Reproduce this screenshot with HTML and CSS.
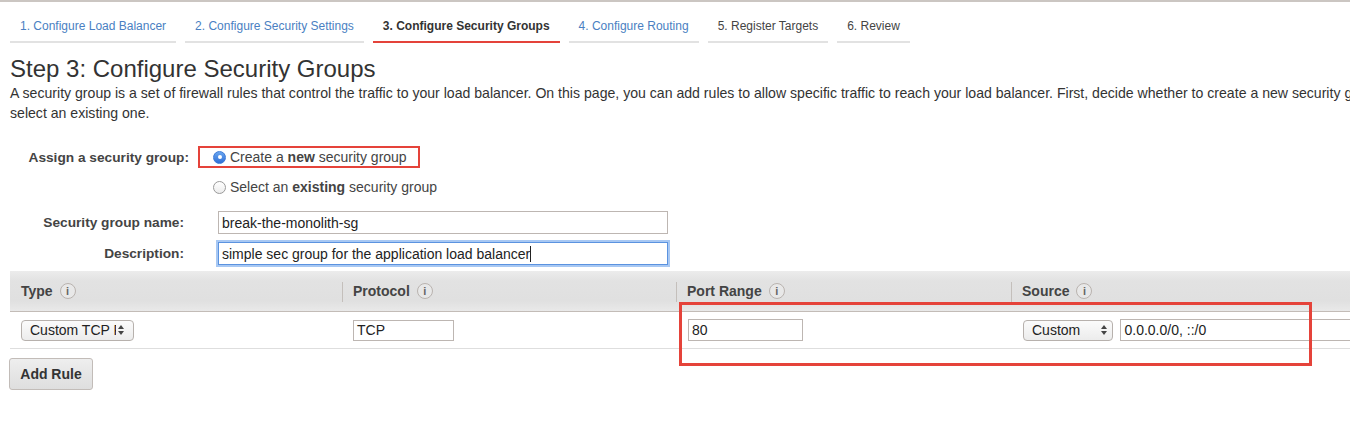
FILE: index.html
```html
<!DOCTYPE html>
<html>
<head>
<meta charset="utf-8">
<link rel="stylesheet" href="styles.css">
</head>
<body>
<div class="page">
  <nav class="tabs">
    <a class="tab link">1. Configure Load Balancer</a>
    <a class="tab link">2. Configure Security Settings</a>
    <a class="tab active">3. Configure Security Groups</a>
    <a class="tab link">4. Configure Routing</a>
    <a class="tab">5. Register Targets</a>
    <a class="tab">6. Review</a>
  </nav>

  <h1 class="title">Step 3: Configure Security Groups</h1>
  <p class="intro">A security group is a set of firewall rules that control the traffic to your load balancer. On this page, you can add rules to allow specific traffic to reach your load balancer. First, decide whether to create a new security group or select an existing one.</p>

  <div class="form">
    <div class="label">Assign a security group:</div>
    <div class="ctrl">
      <span class="highlight">
        <span class="radio checked"></span>
        <span>Create a <b>new</b> security group</span>
      </span>
    </div>

    <div class="label"></div>
    <div class="ctrl">
      <span class="radio"></span>
      <span>Select an <b>existing</b> security group</span>
    </div>

    <div class="label name">Security group name:</div>
    <div class="ctrl">
      <div class="input wide">break-the-monolith-sg</div>
    </div>

    <div class="label desc">Description:</div>
    <div class="ctrl">
      <div class="input wide focused">simple sec group for the application load balancer<span class="caret"></span></div>
    </div>
  </div>

  <div class="rules">
    <div class="thead">
      <div class="th first"><span class="th-in">Type <span class="info">i</span></span></div>
      <div class="th"><span class="th-in">Protocol <span class="info">i</span></span></div>
      <div class="th"><span class="th-in">Port Range <span class="info">i</span></span></div>
      <div class="th"><span class="th-in">Source <span class="info">i</span></span></div>
    </div>
    <div class="trow">
      <div class="td first">
        <div class="select type-select"><span class="sel-text">Custom TCP Rule</span><span class="arrows"><span class="up"></span><span class="down"></span></span></div>
      </div>
      <div class="td">
        <div class="input proto">TCP</div>
      </div>
      <div class="td">
        <div class="input port">80</div>
      </div>
      <div class="td src">
        <div class="select src-select"><span class="sel-text">Custom</span><span class="arrows"><span class="up"></span><span class="down"></span></span></div>
        <div class="input cidr">0.0.0.0/0, ::/0</div>
      </div>
    </div>
    <div class="annot"></div>
  </div>

  <button class="add-rule">Add Rule</button>
</div>
</body>
</html>
```

FILE: styles.css
```css
html, body {
  margin: 0;
  padding: 0;
  background: #fff;
  overflow: hidden;
}
body {
  font-family: "Liberation Sans", Arial, Helvetica, sans-serif;
  font-size: 14px;
  color: #444;
  border-top: 2px solid #cbc6c2;
}
.page {
  width: 1500px;
  padding-left: 10px;
}

/* tabs */
.tabs {
  display: flex;
  gap: 9px;
  padding-top: 16px;
}
.tab {
  font-size: 12px;
  line-height: 16px;
  padding: 0 10px 7px 10px;
  border-bottom: 2px solid #e2e2e2;
  color: #444;
}
.tab.link { color: #4a7fc2; }
.tab.active {
  font-weight: bold;
  color: #333;
  border-bottom-color: #e4433a;
}

.title {
  margin: 12px 0 0 0;
  font-size: 24px;
  line-height: 28px;
  font-weight: normal;
  color: #333;
}
.intro {
  margin: 0;
  font-size: 14.1px;
  line-height: 20px;
  color: #333;
  width: 1420px;
}

/* form */
.form {
  display: grid;
  grid-template-columns: 179px 1fr;
  column-gap: 24px;
  margin-top: 23px;
}
.label {
  font-weight: bold;
  font-size: 13.7px;
  text-align: right;
  color: #444;
  display: flex;
  align-items: center;
  justify-content: flex-end;
  white-space: nowrap;
}
.ctrl {
  display: flex;
  align-items: center;
  gap: 4px;
  color: #444;
}
.form > .label:nth-child(1), .form > .ctrl:nth-child(2) { height: 22px; }
.form > .label:nth-child(3), .form > .ctrl:nth-child(4) { height: 22px; margin-top: 8px; }
.form > .label:nth-child(5), .form > .ctrl:nth-child(6) { height: 23px; margin-top: 13px; }
.form > .label:nth-child(7), .form > .ctrl:nth-child(8) { height: 23px; margin-top: 8px; }
.form .label.name, .form .label.desc { padding-right: 5px; }

.highlight {
  display: inline-flex;
  align-items: center;
  gap: 4px;
  height: 18px;
  margin-left: -15px;
  padding: 0 11px 0 13px;
  border: 2px solid #e5433a;
}
.radio {
  width: 13px;
  height: 13px;
  border-radius: 50%;
  border: 1px solid #9a9a9a;
  background: linear-gradient(#fff, #ececec);
  box-sizing: border-box;
  display: inline-block;
  position: relative;
  flex: none;
}
.radio.checked {
  border-color: #3d7ad6;
  background: linear-gradient(#6aa6f0, #2f6fd6);
}
.radio.checked::after {
  content: "";
  position: absolute;
  left: 3.5px;
  top: 3.5px;
  width: 4px;
  height: 4px;
  border-radius: 50%;
  background: #fff;
}

.input {
  box-sizing: border-box;
  border: 1px solid #bdb6b2;
  background: #fff;
  padding: 0 3px;
  color: #222;
  display: flex;
  align-items: center;
  white-space: nowrap;
  overflow: hidden;
}
.input.wide {
  width: 450px;
  height: 23px;
  margin-left: 5px;
}
.input.focused {
  border: 1px solid #5b93e0;
  box-shadow: 0 0 0 2px #a8c8f3;
}
.caret {
  display: inline-block;
  width: 1px;
  height: 16px;
  background: #222;
}

/* rules table */
.rules {
  position: relative;
  margin-top: 6px;
}
.thead {
  display: grid;
  grid-template-columns: 332px 334px 335px 400px;
  height: 40px;
  background: linear-gradient(#ececec, #e2e2e2 25%, #e0e0e0 75%, #e9e9e9);
  border-bottom: 1px solid #c3bcb7;
}
.th {
  display: flex;
  align-items: center;
  position: relative;
}
.th::before {
  content: "";
  position: absolute;
  left: 0;
  top: 11px;
  height: 20px;
  border-left: 1px solid #c4bfbb;
}
.th.first::before { display: none; }
.th-in {
  padding-left: 11px;
  font-weight: bold;
  color: #444;
  display: flex;
  align-items: center;
  gap: 7px;
}
.info {
  width: 14px;
  height: 14px;
  border: 1px solid #b9b3af;
  border-radius: 50%;
  font-size: 11px;
  font-weight: bold;
  color: #666;
  display: inline-flex;
  align-items: center;
  justify-content: center;
  background: #e8e8e8;
  line-height: 1;
}
.trow {
  display: grid;
  grid-template-columns: 332px 334px 335px 400px;
  height: 36px;
  border-bottom: 1px solid #dedede;
}
.td {
  display: flex;
  align-items: center;
  padding-left: 11px;
}
.td.src { gap: 7px; padding-left: 12px; }

.select {
  box-sizing: border-box;
  height: 21px;
  border: 1px solid #b7b1ad;
  border-radius: 4px;
  background: linear-gradient(#fbfbfb, #ececec);
  display: flex;
  align-items: center;
  padding: 0 5px 0 8px;
  color: #222;
  white-space: nowrap;
  overflow: hidden;
}
.sel-text { overflow: hidden; flex: 1; }
.type-select { width: 113px; padding-right: 4px; }
.type-select .sel-text { max-width: 86px; }
.src-select { width: 93px; }
.arrows {
  display: flex;
  flex-direction: column;
  gap: 2px;
  margin-left: 2px;
  flex: none;
}
.up, .down {
  width: 0;
  height: 0;
  border-left: 3px solid transparent;
  border-right: 3px solid transparent;
}
.up { border-bottom: 4px solid #444; }
.down { border-top: 4px solid #444; }

.proto { width: 101px; height: 21px; }
.port { width: 115px; height: 22px; margin-left: 1px; }
.cidr { width: 300px; height: 22px; }

.annot {
  position: absolute;
  left: 669px;
  top: 31px;
  width: 627px;
  height: 58px;
  border: 3px solid #e5433a;
}

.add-rule {
  margin-top: 9px;
  margin-left: -1px;
  width: 84px;
  height: 32px;
  border: 1px solid #c2bcb8;
  border-radius: 3px;
  background: linear-gradient(#eeeeee, #dedede);
  font-family: "Liberation Sans", Arial, sans-serif;
  font-size: 14px;
  font-weight: bold;
  color: #333;
  padding: 0;
}
```
